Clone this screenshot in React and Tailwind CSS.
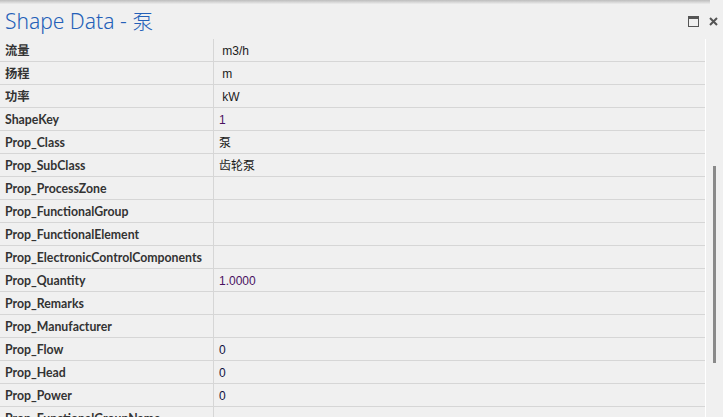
import React from "react";

const rows = [
  { label: "流量", value: " m3/h" },
  { label: "扬程", value: " m" },
  { label: "功率", value: " kW" },
  { label: "ShapeKey", value: "1", tone: "num" },
  { label: "Prop_Class", value: "泵" },
  { label: "Prop_SubClass", value: "齿轮泵" },
  { label: "Prop_ProcessZone", value: "" },
  { label: "Prop_FunctionalGroup", value: "" },
  { label: "Prop_FunctionalElement", value: "" },
  { label: "Prop_ElectronicControlComponents", value: "" },
  { label: "Prop_Quantity", value: "1.0000", tone: "num" },
  { label: "Prop_Remarks", value: "" },
  { label: "Prop_Manufacturer", value: "" },
  { label: "Prop_Flow", value: "0", tone: "zero" },
  { label: "Prop_Head", value: "0", tone: "zero" },
  { label: "Prop_Power", value: "0", tone: "zero" },
  { label: "Prop_FunctionalGroupName", value: "" },
];

const MaximizeIcon = () => (
  <svg width="11" height="11" viewBox="0 0 11 11">
    <rect x="0.5" y="0.5" width="10" height="10" fill="none" stroke="#555" />
    <rect x="0" y="0" width="11" height="3" fill="#555" />
  </svg>
);

const CloseIcon = () => (
  <svg width="9" height="9" viewBox="0 0 9 9">
    <path d="M1 1 L8 8 M8 1 L1 8" stroke="#555" strokeWidth="2" />
  </svg>
);

const Row = ({ label, value, tone }) => {
  const valueColor =
    tone === "num" ? "text-[#4a1060]" : tone === "zero" ? "text-[#101040]" : "text-[#1a1a1a]";
  return (
    <div className="flex h-[23px] border-b border-[#d6d6d6]">
      <div
        className="w-[214px] shrink-0 border-r border-[#d6d6d6] pl-[5px] pt-[2px] flex items-center font-bold text-[12.3px] text-[#333] whitespace-nowrap"
        style={{ fontFamily: 'Lato, "Noto Sans CJK SC", sans-serif' }}
      >
        {label}
      </div>
      <div className={`pl-[5px] pt-[2px] flex items-center text-[12px] whitespace-pre ${valueColor}`}>
        {value}
      </div>
    </div>
  );
};

export default function App() {
  return (
    <div
      className="w-[723px] h-[417px] bg-[#f0f0f0] overflow-hidden flex flex-col"
      style={{ fontFamily: '"Liberation Sans", "Noto Sans CJK SC", sans-serif' }}
    >
      <div className="h-[4px] w-[710px] shrink-0 bg-gradient-to-b from-[#bdbdbd] to-[#ececec]" />
      <div className="h-[35px] shrink-0 flex items-start justify-between">
        <h1
          className="pl-[5px] pt-[4px] text-[21px] leading-[26px] font-light text-[#2460b8]"
          style={{ fontFamily: '"Noto Sans", "Noto Sans CJK SC", sans-serif' }}
        >
          Shape Data - 泵
        </h1>
        <div className="flex items-center gap-[10px] pt-[12px] pr-[5px]">
          <MaximizeIcon />
          <CloseIcon />
        </div>
      </div>
      <div className="flex flex-1 min-h-0">
        <div className="w-[706px] shrink-0 border-r border-white">
          {rows.map((r) => (
            <Row key={r.label} {...r} />
          ))}
        </div>
        <div className="flex-1 pl-[7px] pt-[127px]">
          <div className="w-[3px] h-[197px] bg-[#8a8a8a]" />
        </div>
      </div>
    </div>
  );
}
